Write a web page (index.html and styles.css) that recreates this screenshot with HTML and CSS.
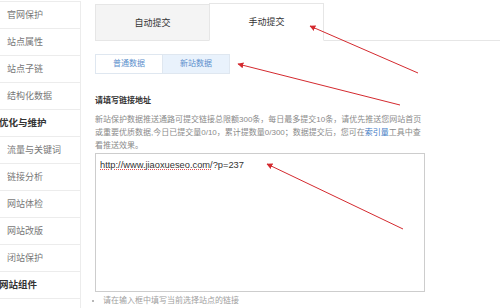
FILE: index.html
```html
<!DOCTYPE html>
<html lang="zh-CN">
<head>
    <meta charset="UTF-8">
    <title>链接提交 - 手动提交</title>
    <link rel="stylesheet" href="styles.css">
</head>
<body>

<div class="page">
    <ul class="sidebar">
        <li class="item">官网保护</li>
        <li class="item">站点属性</li>
        <li class="item">站点子链</li>
        <li class="item">结构化数据</li>
        <li class="group">优化与维护</li>
        <li class="item">流量与关键词</li>
        <li class="item">链接分析</li>
        <li class="item">网站体检</li>
        <li class="item">网站改版</li>
        <li class="item">闭站保护</li>
        <li class="group">网站组件</li>
        <li class="item"></li>
    </ul>

    <main class="content">
        <div class="tabs">
            <div class="tab">自动提交</div>
            <div class="tab active">手动提交</div>
        </div>

        <div class="subtabs">
            <div class="subtab">普通数据</div>
            <div class="subtab selected">新站数据</div>
        </div>

        <h2 class="title">请填写链接地址</h2>
        <p class="desc">新站保护数据推送通路可提交链接总限额300条，每日最多提交10条，请优先推送您网站首页或重要优质数据,今日已提交量0/10，累计提数量0/300；数据提交后，您可在<a href="#">索引量</a>工具中查看推送效果。</p>

        <div class="urlbox"><span class="typo">http://www.jiaoxueseo.com/</span>?p=237</div>

        <ul class="tips">
            <li>请在输入框中填写当前选择站点的链接</li>
        </ul>
    </main>
</div>

<!-- annotation arrows drawn over the screenshot -->
<svg class="arrows" width="500" height="308" viewBox="0 0 500 308">
    <defs>
        <marker id="head" viewBox="0 0 10 10" refX="9" refY="5" markerWidth="6" markerHeight="6" orient="auto" markerUnits="userSpaceOnUse">
            <path d="M0 0 L10 5 L0 10 Z" fill="#d42a2f"/>
        </marker>
    </defs>
    <line x1="418" y1="73" x2="310" y2="26" marker-end="url(#head)"/>
    <line x1="400" y1="105" x2="238" y2="64" marker-end="url(#head)"/>
    <line x1="403" y1="229" x2="267" y2="164" marker-end="url(#head)"/>
</svg>

</body>
</html>
```

FILE: styles.css
```css
body {
    margin: 0;
    padding: 0;
    background-color: #fff;
    font-family: "Liberation Sans", "Noto Sans CJK SC", sans-serif;
    color: #333;
    overflow: hidden;
}

.page {
    display: flex;
    width: 500px;
    height: 308px;
    overflow: hidden;
}

/* left menu */
.sidebar {
    list-style: none;
    margin: 1px 0 0 0;
    padding: 0;
    width: 80px;
    flex-shrink: 0;
    border-top: 1px solid #ececec;
    border-right: 1px solid #ececec;
}

.sidebar li {
    height: 26px;
    line-height: 26px;
    border-bottom: 1px solid #ececec;
    white-space: nowrap;
}

.item {
    padding-left: 7px;
    font-size: 9px;
    color: #777;
}

.group {
    text-indent: -1px;
    font-size: 9.5px;
    font-weight: bold;
    color: #333;
}

/* right content */
.content {
    flex: 1;
    padding: 3px 0 0 14px;
}

.tabs {
    display: flex;
    border-bottom: 1px solid #e6e6e6;
}

.tab {
    width: 113px;
    height: 36px;
    line-height: 36px;
    text-align: center;
    font-size: 9px;
    color: #333;
    margin-bottom: -1px;
}

.tab:first-child {
    background-color: #f4f4f4;
    border: 1px solid #e6e6e6;
    border-right: none;
    margin-top: 1px;
    height: 35px;
}

.tab.active {
    background-color: #fff;
    border: 1px solid #e6e6e6;
    border-bottom: 1px solid #fff;
}

.subtabs {
    display: flex;
    margin-top: 13px;
}

.subtab {
    width: 66px;
    height: 18px;
    line-height: 18px;
    text-align: center;
    font-size: 8px;
    color: #5d8fcc;
    border: 1px solid #dfe7f0;
}

.subtab + .subtab {
    border-left: none;
}

.subtab.selected {
    background-color: #e9f2fc;
}

.title {
    margin: 21px 0 0 0;
    font-size: 8px;
    line-height: 12px;
    font-weight: bold;
    color: #333;
}

.desc {
    margin: 6px 0 0 0;
    width: 330px;
    font-size: 8px;
    line-height: 13px;
    color: #8a8a8a;
}

.desc a {
    color: #3b78c4;
    text-decoration: none;
}

.urlbox {
    margin-top: 1px;
    width: 320px;
    height: 127px;
    padding: 5px 4px;
    border: 1px solid #cdcdcd;
    font-size: 9.3px;
    line-height: 12px;
    color: #333;
}

.typo {
    text-decoration: underline dotted #e05050;
    text-decoration-thickness: 1px;
}

.tips {
    margin: 3px 0 0 0;
    padding: 0 0 0 8px;
    font-size: 8px;
    line-height: 12px;
    color: #a0a0a0;
}

.tips li::marker {
    font-size: 7px;
}

.arrows {
    position: absolute;
    left: 0;
    top: 0;
    pointer-events: none;
}

.arrows line {
    stroke: #d42a2f;
    stroke-width: 1;
}
```
